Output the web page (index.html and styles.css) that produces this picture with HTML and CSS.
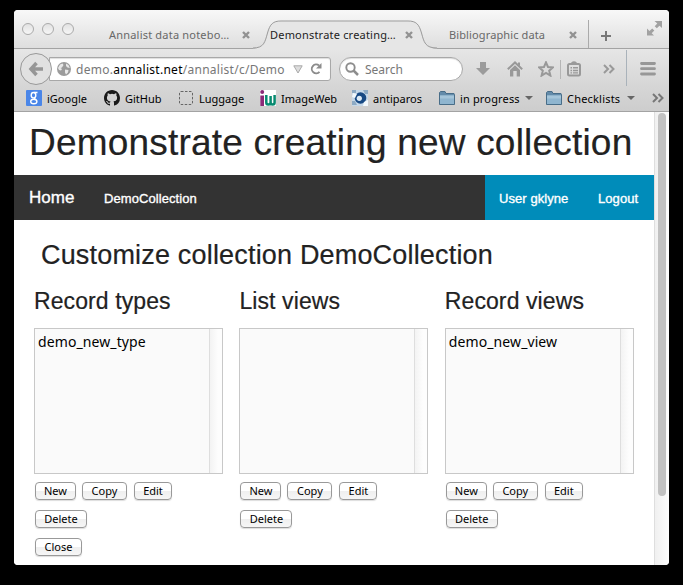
FILE: index.html
```
<!DOCTYPE html>
<html lang="en">
<head>
<meta charset="utf-8">
<title>Demonstrate creating new collection</title>
<link rel="stylesheet" href="styles.css">
</head>
<body>
<div class="window">
  <header class="tabs">
    <div class="lights"><i></i><i></i><i></i></div>
    <div class="tab first"><span>Annalist data notebo…</span><svg class="x" viewBox="0 0 8 8"><path d="M1 1l6 6M7 1L1 7"/></svg></div>
    <div class="tab active">
      <svg class="shape" width="184" height="29" viewBox="0 0 184 29"><path class="fill" d="M0 28.5C11 28.5 12 22 14.500 13C17 4 20 1.500 28 1.500H155C163 1.500 166 4 168.500 13C171 22 172 28.500 184 28.500V29H0Z"/><path class="line" d="M0 28C11 28 12 22 14.500 13C17 4 20 1 28 1H155C163 1 166 4 168.500 13C171 22 172 28 184 28"/></svg>
      <span>Demonstrate creating…</span><svg class="x" viewBox="0 0 8 8"><path d="M1 1l6 6M7 1L1 7"/></svg>
    </div>
    <div class="tab last"><span>Bibliographic data</span><svg class="x" viewBox="0 0 8 8"><path d="M1 1l6 6M7 1L1 7"/></svg></div>
    <svg class="plus" width="12" height="12" viewBox="0 0 12 12"><path d="M6 1v10M1 6h10" stroke="#777" stroke-width="2"/></svg>
    <svg class="full" width="15" height="15" viewBox="0 0 15 15" fill="#a2a2a2"><path d="M7.500 0H15v7l-2.500-2.300-2.700 2.600-2.100-2 2.600-2.800zM0 7.500v7h7l-2.300-2.300 2.600-2.600-2.100-2-2.700 2.500z"/></svg>
  </header>
  <div class="toolbar">
    <div class="back"><svg width="16" height="16" viewBox="0 0 16 16"><path d="M8.500 2L3 8l5.500 6M3.500 8H15" fill="none" stroke="#969696" stroke-width="3.500"/></svg></div>
    <div class="url">
      <svg width="14" height="14" viewBox="0 0 14 14"><circle cx="7" cy="7" r="7" fill="#9b9b9b"/><path d="M1 6l2-3.500 2.500-1 1 1.500-1.500 2.500-1.500.5 1.500 1-1 1.500L2 8zM9 1.500l2.500 1.500 1.300 3-2.300-.5-1.500-1.500zM8 7.500l3.500.5-.5 2.500-2 2-1-2z" fill="#e8e8e8"/></svg>
      <span class="address">demo.<b>annalist.net</b>/annalist/c/Demo</span>
      <svg class="drop" width="10" height="9" viewBox="0 0 10 9"><path d="M.8.800h8.400L5 8z" fill="#ddd" stroke="#aaa"/></svg>
      <svg class="reload" width="12" height="12" viewBox="0 0 12 12"><path d="M9.500 8.800A4.400 4.400 0 1 1 9 2.500" fill="none" stroke="#8c8c8c" stroke-width="1.900"/><path d="M11.500 0v5.500H6z" fill="#8c8c8c"/></svg>
    </div>
    <div class="search"><svg width="14" height="14" viewBox="0 0 14 14" fill="none" stroke="#8d8d8d"><circle cx="5.500" cy="5.500" r="4.200" stroke-width="1.900"/><path d="M8.500 8.500L13 13" stroke-width="2.500"/></svg><span>Search</span></div>
    <div class="tools">
      <svg width="16" height="16" viewBox="0 0 16 16"><path d="M5 1h6v6h4l-7 7-7-7h4z" fill="#9b9b9b"/></svg>
      <svg width="16" height="16" viewBox="0 0 16 16"><path d="M.800 8.300L8 1.500l7.200 6.800" fill="none" stroke="#999" stroke-width="2"/><path d="M3 9l5-4.700L13 9v6.500H9.700V10H6.300v5.500H3zM11 1.500h2v4l-2-2z" fill="#999"/></svg>
      <svg width="16" height="16" viewBox="0 0 16 16"><path d="M8 1.300l2 4.700 5 .4-3.800 3.300 1.200 4.900L8 12l-4.400 2.600 1.200-4.900L1 6.400 6 6z" fill="none" stroke="#999" stroke-width="2"/></svg>
      <i class="mini"></i>
      <svg width="14" height="16" viewBox="0 0 14 16"><rect x="1" y="3" width="12" height="11.500" rx="1.500" fill="none" stroke="#999" stroke-width="2"/><path d="M4 3q0-2.700 3-2.700T10 3v1H4zM3.500 6h1.500v1.500H3.500zM6 6h5v1.500H6zM3.500 8.700h1.500v1.500H3.500zM6 8.700h5v1.500H6zM3.500 11.300h1.500v1.300H3.500zM6 11.300h5v1.300H6z" fill="#999"/></svg>
      <svg class="more" width="12" height="10" viewBox="0 0 12 10"><path d="M1 1l4 4-4 4M6.500 1l4 4-4 4" fill="none" stroke="#999" stroke-width="2"/></svg>
    </div>
    <svg class="menu" width="16" height="14" viewBox="0 0 16 14"><path d="M1.500 1.500h13M1.500 6.700h13M1.500 12h13" stroke="#979797" stroke-width="2.800" stroke-linecap="round"/></svg>
  </div>
  <nav class="bookmarks">
    <svg width="16" height="16" viewBox="0 0 16 16"><rect width="16" height="16" rx="1" fill="#4a86e8"/><g fill="none" stroke="#fff" stroke-width="1.400"><ellipse cx="7.500" cy="5.200" rx="2.300" ry="2.700"/><path d="M8 2.500h3.500M8 8l1.500 1.500"/><ellipse cx="7.800" cy="11.500" rx="3.100" ry="2.200"/></g></svg><span class="b1">iGoogle</span>
    <svg width="16" height="16" viewBox="0 0 16 16"><path fill="#191919" d="M8 0C3.580 0 0 3.580 0 8c0 3.540 2.290 6.530 5.470 7.590.4.070.55-.17.55-.38 0-.19-.01-.82-.01-1.490-2.010.37-2.530-.49-2.690-.94-.09-.23-.48-.94-.82-1.130-.28-.15-.68-.52-.01-.53.63-.01 1.080.58 1.230.82.72 1.210 1.870.87 2.330.66.07-.52.28-.87.51-1.070-1.780-.2-3.640-.89-3.640-3.950 0-.87.31-1.590.82-2.150-.08-.2-.36-1.020.08-2.120 0 0 .67-.21 2.200.82a7.500 7.500 0 0 1 4 0c1.530-1.040 2.200-.82 2.200-.82.44 1.100.16 1.920.08 2.120.51.560.82 1.270.82 2.150 0 3.070-1.870 3.750-3.650 3.950.29.25.54.73.54 1.480 0 1.070-.01 1.930-.01 2.200 0 .21.15.46.55.38A8 8 0 0 0 16 8c0-4.420-3.580-8-8-8z"/></svg><span class="b2">GitHub</span>
    <svg width="16" height="16" viewBox="0 0 16 16"><rect x="1.500" y="1.500" width="13" height="13" rx="1.500" fill="none" stroke="#666" stroke-dasharray="2.500 1.500"/></svg><span class="b3">Luggage</span>
    <svg width="16" height="16" viewBox="0 0 16 16"><rect width="16" height="16" fill="#fff"/><path d="M.3 5.500h3.700v10.500H.3z" fill="#8b2a78"/><circle cx="2.200" cy="2" r="2" fill="#8b2a78"/><path d="M6.300 5v7.500q0 2 2 2 2.300 0 2.300-2V6M10.600 12.500q0 2 2 2 2 0 2-2V5" fill="none" stroke="#078a70" stroke-width="2.500"/></svg><span class="b4">ImageWeb</span>
    <svg width="16" height="16" viewBox="0 0 16 16"><rect width="16" height="16" fill="#c6d8e8"/><path d="M0 0h4v3H0zM11 0h5v4h-3zM0 11h3l2 4H0z" fill="#8daac4"/><circle cx="8.500" cy="8" r="5.800" fill="#174984"/><circle cx="7.300" cy="8.300" r="2.600" fill="#dceaf5"/><path d="M1 3l4 1-2 4-3-1zM12 12l4-2v6h-5z" fill="#f2f8fc"/></svg><span class="b5">antiparos</span>
    <svg class="folder" width="16" height="16" viewBox="0 0 16 16"><path d="M.5 14.500v-12l1-1H6l1 2h8l.5 1v10z" fill="#638baa" stroke="#486d88"/><path d="M1 5.500h14V14H1z" fill="#8fb5cf"/><path d="M1 5.500h14v3H1z" fill="#a5c5da"/></svg><span class="b6">in progress</span><i class="caret c1"></i>
    <svg class="folder" width="16" height="16" viewBox="0 0 16 16"><path d="M.5 14.500v-12l1-1H6l1 2h8l.5 1v10z" fill="#638baa" stroke="#486d88"/><path d="M1 5.500h14V14H1z" fill="#8fb5cf"/><path d="M1 5.500h14v3H1z" fill="#a5c5da"/></svg><span class="b7">Checklists</span><i class="caret c2"></i>
    <svg width="12" height="10" viewBox="0 0 12 10"><path d="M1 1l4 4-4 4M6.500 1l4 4-4 4" fill="none" stroke="#777" stroke-width="2"/></svg>
  </nav>
  <div class="viewport">
    <main>
      <h1>Demonstrate creating new collection</h1>
      <nav class="topbar">
        <a class="home">Home</a><a class="coll">DemoCollection</a>
        <div class="user"><a class="name">User gklyne</a><a class="logout">Logout</a></div>
      </nav>
      <h2>Customize collection DemoCollection</h2>
      <div class="columns">
        <section><h3>Record types</h3><div class="list"><span>demo_new_type</span></div>
          <div class="buttons"><button class="new">New</button><button class="copy">Copy</button><button class="edit">Edit</button><button class="delete">Delete</button></div></section>
        <section><h3>List views</h3><div class="list"></div>
          <div class="buttons"><button class="new">New</button><button class="copy">Copy</button><button class="edit">Edit</button><button class="delete">Delete</button></div></section>
        <section><h3>Record views</h3><div class="list"><span>demo_new_view</span></div>
          <div class="buttons"><button class="new">New</button><button class="copy">Copy</button><button class="edit">Edit</button><button class="delete">Delete</button></div></section>
      </div>
      <div class="footer"><button class="close">Close</button></div>
    </main>
    <div class="scroll"><i></i></div>
  </div>
</div>
</body>
</html>
```
FILE: styles.css
```
* { box-sizing: border-box; }
body { margin: 0; width: 683px; height: 585px; padding: 10px 14px 20px; background: #000; overflow: hidden; font-family: "Noto Sans", sans-serif; font-size: 11px; }
svg { display: block; flex: none; }
i { display: block; flex: none; }
span { white-space: nowrap; flex: none; }
.window { width: 655px; height: 555px; border-radius: 4px; overflow: hidden; background: #fff; }

.tabs { height: 39px; display: flex; background: linear-gradient(#f8f8f8, #dedede); border-bottom: 1px solid #a3a3a3; color: #686868; }
.lights { display: flex; gap: 8px; padding: 13px 0 0 8px; width: 95px; flex: none; }
.lights i { width: 12px; height: 12px; border-radius: 50%; border: 1px solid #aaa; background: linear-gradient(#e2e2e2, #f6f6f6); }
.tab { display: flex; align-items: center; padding-top: 12px; flex: none; }
.tab span { line-height: 15px; width: 125px; padding-bottom: 2px; margin-top: 0; letter-spacing: .2px; position: relative; }
.x { width: 8px; height: 8px; margin-left: 8px; position: relative; }
.x path { stroke: #929292; stroke-width: 2.400; fill: none; }
.first { width: 144px; }
.active { width: 184px; padding-left: 17px; position: relative; color: #222; }
.active .x { margin-left: 10px; }
.shape { position: absolute; left: 0; top: 10px; }
.fill { fill: #e6e6e6; }
.line { fill: none; stroke: #999; }
.last { width: 152px; padding-left: 12px; border-right: 1px solid #aaa; margin-top: 10px; padding-top: 2px; }
.tab.last span { width: 96px; letter-spacing: .12px; }
.last .x { margin-left: 24px; }
.plus { margin: 20px 0 0 11px; }
.full { margin: 11px 0 0 35px; }

.toolbar { height: 37px; display: flex; align-items: center; background: linear-gradient(#e6e6e6, #d6d6d6); padding-left: 6px; }
.back { width: 32px; height: 32px; border: 1px solid #999; border-radius: 50%; background: #e1e1e1; display: grid; place-items: center; z-index: 1; margin-top: 3px; flex: none; }
.url { width: 282px; height: 24px; margin: 3px 0 0 -3px; border: 1px solid #a8a8a8; border-radius: 0 3px 3px 0; background: #fff; display: flex; align-items: center; padding-left: 7px; flex: none; box-shadow: inset 0 1px 1px #ddd; }
.address { font-size: 12px; width: 210px; margin-left: 5px; margin-right: 1px; color: #777; letter-spacing: .27px; }
.address b { font-weight: 400; color: #000; }
.drop { margin-left: 6px; }
.reload { margin-left: 7px; }
.search { width: 124px; height: 24px; margin: 3px 0 0 8px; border: 1px solid #a8a8a8; border-radius: 12px; background: #fff; display: flex; align-items: center; padding-left: 5px; gap: 6px; flex: none; color: #777; font-size: 12px; box-shadow: inset 0 1px 1px #ddd; }
.tools { display: flex; align-items: center; width: 164px; height: 36px; padding: 3px 0 0 12px; gap: 16px; flex: none; border-right: 1px solid #a9b2ba; }
.tools svg:nth-child(3) { margin-left: -1px; }
.mini { width: 1px; height: 19px; background: #b5b5b5; margin: 0 -10px; }
.more { margin-left: 6px; }
.menu { margin: 3px 0 0 13px; }

.bookmarks { height: 26px; display: flex; align-items: center; background: linear-gradient(#d6d6d6, #cdcdcd); border-bottom: 1px solid #a3a3a3; padding: 0 0 1px 12px; }
.bookmarks span { margin: 0 16px 0 5px; }
.b1 { width: 41px; } .b2 { width: 37px; } .b3 { width: 45px; } .b4 { width: 55px; } .b5 { width: 50px; }
.bookmarks .b6 { width: 60px; margin-right: 5px; letter-spacing: .15px; }
.bookmarks .b7 { width: 55px; margin-right: 5px; letter-spacing: .2px; }
.caret { border: 4px solid transparent; border-bottom: 0; border-top-color: #666; }
.c1 { margin-right: 13px; }
.c2 { margin-right: 17px; }

.viewport { display: flex; height: 453px; }
main { width: 640px; flex: none; background: #fff; color: #222; font-family: "Liberation Sans", sans-serif; }
h1, h2, h3 { font-weight: 400; margin: 0; white-space: nowrap; -webkit-text-stroke: .2px #222; }
h1 { font-size: 37px; line-height: 52px; padding: 5px 0 6px 15px; height: 63px; letter-spacing: .2px; }
.topbar { height: 45px; background: #333; display: flex; align-items: center; color: #fff; font-size: 13px; letter-spacing: .07px; -webkit-text-stroke: .35px #fff; }
.topbar a { white-space: nowrap; padding-top: 1px; }
.home { font-size: 17px; width: 46px; margin-left: 15px; }
.coll { margin-left: 29px; }
.user { width: 169px; height: 45px; background: #008cba; margin-left: auto; display: flex; align-items: center; padding-left: 14px; }
.name { width: 70px; }
.logout { margin-left: 29px; }
h2 { font-size: 27px; line-height: 38px; padding: 16px 0 0 27px; height: 65px; letter-spacing: .18px; }
.columns { display: grid; grid-template-columns: repeat(3, 189px); column-gap: 16.4px; padding-left: 20px; }
h3 { font-size: 23px; line-height: 32px; height: 43px; letter-spacing: .1px; }
.list { height: 146px; border: 1px solid #c8c8c8; background: linear-gradient(90deg, #fafafa 174px, #dedede 174px, #dedede 175px, #f3f3f3 175px, #fdfdfd 183px); padding: 3px 3px; color: #000; font: 14px/19px "Noto Sans", sans-serif; letter-spacing: .1px; }
.buttons { display: flex; flex-wrap: wrap; gap: 10px 6px; padding: 8px 1px 0; width: 150px; }
button { height: 18px; padding: 0; border: 1px solid #999; border-radius: 4px; background: linear-gradient(#fff 50%, #efefef 50%, #f6f6f6); color: #000; font: 11px/14px "Noto Sans", sans-serif; box-shadow: 0 1px 1px #ddd; }
.new { width: 41px; } .copy { width: 45px; } .edit { width: 38px; margin-left: 1px; } .delete { width: 52px; } .close { width: 47px; }
.footer { padding: 10px 0 0 21px; }
.scroll { width: 15px; border-left: 1px solid #dedede; background: linear-gradient(90deg, #f0f0f0, #fcfcfc); padding: 1px 0 0 3px; }
.scroll i { width: 8px; height: 383px; border-radius: 4px; background: #c1c1c1; }
```
